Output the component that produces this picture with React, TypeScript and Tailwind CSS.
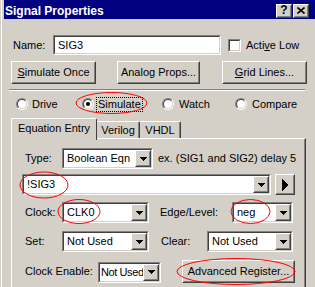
import React from "react";

type Box = { className?: string; children?: React.ReactNode };

function Raised({ className = "", children }: Box) {
  return (
    <div
      className={`border border-t-white border-l-white border-r-[#404040] border-b-[#404040] bg-[#d4d0c8] ${className}`}
    >
      <div className="flex h-full w-full items-center justify-center border border-t-[#d4d0c8] border-l-[#d4d0c8] border-r-[#808080] border-b-[#808080]">
        {children}
      </div>
    </div>
  );
}

function Sunken({ className = "", children }: Box) {
  return (
    <div
      className={`border border-t-[#808080] border-l-[#808080] border-r-white border-b-white ${className}`}
    >
      <div className="flex h-full w-full items-center border border-t-[#404040] border-l-[#404040] border-r-[#d4d0c8] border-b-[#d4d0c8] bg-white">
        {children}
      </div>
    </div>
  );
}

function DownArrow() {
  return (
    <svg width="7" height="4" viewBox="0 0 7 4" shapeRendering="crispEdges">
      <rect x="0" y="0" width="7" height="1" fill="#000" />
      <rect x="1" y="1" width="5" height="1" fill="#000" />
      <rect x="2" y="2" width="3" height="1" fill="#000" />
      <rect x="3" y="3" width="1" height="1" fill="#000" />
    </svg>
  );
}

function RightArrow() {
  return (
    <svg width="6" height="12" viewBox="0 0 6 12" shapeRendering="crispEdges">
      {[0, 1, 2, 3, 4, 5].map((i) => (
        <rect key={i} x={i} y={i} width="1" height={12 - 2 * i} fill="#000" />
      ))}
    </svg>
  );
}

function Combo({
  value,
  className = "",
  textClass = "pl-[3px]",
}: {
  value: string;
  className?: string;
  textClass?: string;
}) {
  return (
    <Sunken className={`h-[21px] shrink-0 ${className}`}>
      <span className={`min-w-0 flex-1 overflow-hidden whitespace-nowrap ${textClass}`}>{value}</span>
      <Raised className="h-full w-[16px] shrink-0">
        <DownArrow />
      </Raised>
    </Sunken>
  );
}

function Radio({ checked = false }: { checked?: boolean }) {
  return (
    <div className="h-[12px] w-[12px] shrink-0 rounded-full border border-t-[#808080] border-l-[#808080] border-r-white border-b-white">
      <div className="flex h-full w-full items-center justify-center rounded-full border border-t-[#404040] border-l-[#404040] border-r-[#d4d0c8] border-b-[#d4d0c8] bg-white">
        {checked && <div className="h-[4px] w-[4px] rounded-full bg-black" />}
      </div>
    </div>
  );
}

function Button({ className = "", children }: Box) {
  return <Raised className={`h-[23px] shrink-0 ${className}`}>{children}</Raised>;
}

export default function App() {
  return (
    <div className="relative h-[287px] w-[315px] overflow-hidden bg-[#d4d0c8] font-['Liberation_Sans',Arial,sans-serif] text-[11px] leading-[13px] text-black shadow-[inset_1px_0_0_#d4d0c8,inset_2px_0_0_#ffffff]">
      {/* title bar */}
      <div className="ml-[4px] flex h-[19px] items-center justify-between bg-[#000080] pl-[1px] pr-[6px]">
        <span className="pt-[3px] text-[12px] font-bold leading-[14px] text-white">Signal Properties</span>
        <div className="mt-[2px] flex gap-[1px]">
          <Raised className="h-[14px] w-[16px]">
            <span className="text-[12px] font-bold leading-[11px]">?</span>
          </Raised>
          <Raised className="h-[14px] w-[16px]">
            <svg width="8" height="7" viewBox="0 0 8 7">
              <path d="M0.5 0.5 L7.5 6.5 M7.5 0.5 L0.5 6.5" stroke="#000" strokeWidth="1.6" />
            </svg>
          </Raised>
        </div>
      </div>

      {/* name row */}
      <div className="mt-[16px] flex h-[20px] items-center">
        <span className="ml-[13px] w-[40px]">Name:</span>
        <Sunken className="h-[20px] w-[168px]">
          <span className="pl-[3px]">SIG3</span>
        </Sunken>
        <Sunken className="ml-[7px] h-[13px] w-[13px]" />
        <span className="ml-[5px]">
          Acti<u>v</u>e Low
        </span>
      </div>

      {/* buttons */}
      <div className="mt-[6px] flex">
        <Button className="ml-[11px] w-[85px]">
          <span>
            <u>S</u>imulate Once
          </span>
        </Button>
        <Button className="ml-[21px] w-[83px]">Analog Props...</Button>
        <Button className="ml-[22px] w-[85px]">
          <span>
            <u>G</u>rid Lines...
          </span>
        </Button>
      </div>

      <div className="ml-[9px] mt-[5px] h-[2px] w-[296px] border-t border-t-[#808080] border-b border-b-white" />

      {/* radios */}
      <div className="mt-[6px] flex h-[14px] items-center">
        <div className="ml-[16px] flex w-[66px] items-center gap-[4px]">
          <Radio />
          <span>Drive</span>
        </div>
        <div className="flex w-[80px] items-center gap-[2px]">
          <Radio checked />
          <span className="border border-dotted border-black px-[1px]">Simulate</span>
        </div>
        <div className="flex w-[73px] items-center gap-[5px]">
          <Radio />
          <span>Watch</span>
        </div>
        <div className="flex items-center gap-[5px]">
          <Radio />
          <span>Compare</span>
        </div>
      </div>

      {/* tabs */}
      <div className="ml-[11px] mt-[7px] flex h-[20px] items-end">
        <div className="relative z-10 -mb-[2px] flex h-[22px] w-[86px] items-center justify-center rounded-t-[2px] border-l border-t border-r border-l-white border-t-white border-r-[#404040] bg-[#d4d0c8] pb-[2px]">
          Equation Entry
        </div>
        <div className="flex h-[17px] w-[43px] items-center justify-center rounded-t-[2px] border-t border-r border-t-white border-r-[#404040] shadow-[inset_-1px_0_0_#808080]">
          Verilog
        </div>
        <div className="flex h-[17px] w-[41px] items-center justify-center rounded-t-[2px] border-t border-r border-t-white border-r-[#404040] shadow-[inset_-1px_0_0_#808080]">
          VHDL
        </div>
      </div>

      {/* panel */}
      <div className="ml-[11px] h-[160px] w-[295px] border-l border-t border-r border-l-white border-t-white border-r-[#404040] shadow-[inset_-1px_0_0_#808080]">
        <div className="ml-[13px] mt-[9px] flex h-[21px] items-center">
          <span className="w-[37px]">Type:</span>
          <Combo value="Boolean Eqn" className="w-[91px]" />
          <span className="ml-[5px]">ex. (SIG1 and SIG2) delay 5</span>
        </div>

        <div className="ml-[10px] mt-[5px] flex h-[21px] items-center">
          <Combo value="!SIG3" className="w-[249px]" />
          <Button className="ml-[4px] !h-[21px] w-[20px]">
            <RightArrow />
          </Button>
        </div>

        <div className="ml-[13px] mt-[7px] flex h-[21px] items-center">
          <span className="w-[37px]">Clock:</span>
          <Combo value="CLK0" className="w-[87px]" />
          <span className="ml-[11px] w-[72px]">Edge/Level:</span>
          <Combo value="neg" className="w-[61px]" />
        </div>

        <div className="ml-[13px] mt-[8px] flex h-[21px] items-center">
          <span className="w-[37px]">Set:</span>
          <Combo value="Not Used" className="w-[87px]" />
          <span className="ml-[12px] w-[46px]">Clear:</span>
          <Combo value="Not Used" className="w-[86px]" />
        </div>

        <div className="ml-[13px] mt-[8px] flex h-[23px] items-center">
          <span className="w-[73px]">Clock Enable:</span>
          <Combo
            value="Not Used"
            className="mt-[1px] w-[63px]"
            textClass="pl-[1px] tracking-[-0.4px]"
          />
          <Button className="ml-[21px] w-[113px]">Advanced Register...</Button>
        </div>
      </div>

      {/* red annotation ellipses */}
      <svg
        className="pointer-events-none absolute left-0 top-0"
        width="315"
        height="287"
        viewBox="0 0 315 287"
        fill="none"
        stroke="#ff0000"
        strokeWidth="1"
      >
        <ellipse cx="111.5" cy="103" rx="35.5" ry="10.5" />
        <ellipse cx="44" cy="185" rx="24" ry="13" />
        <ellipse cx="79" cy="211.5" rx="21" ry="12" />
        <ellipse cx="250.5" cy="211.5" rx="19.5" ry="12" />
        <ellipse cx="236" cy="271.5" rx="59" ry="13" />
      </svg>
    </div>
  );
}
